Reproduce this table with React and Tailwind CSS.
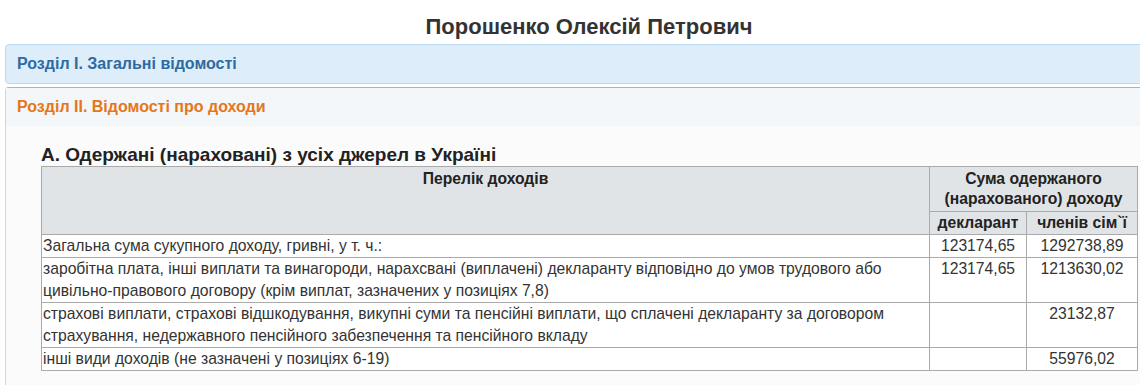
export default function App() {
  const rows = [
    {
      t: "Загальна сума сукупного доходу, гривні, у т. ч.:",
      a: "123174,65",
      b: "1292738,89",
    },
    {
      t: "заробітна плата, інші виплати та винагороди, нарахсвані (виплачені) декларанту відповідно до умов трудового або цивільно-правового договору (крім виплат, зазначених у позиціях 7,8)",
      a: "123174,65",
      b: "1213630,02",
    },
    {
      t: "страхові виплати, страхові відшкодування, викупні суми та пенсійні виплати, що сплачені декларанту за договором страхування, недержавного пенсійного забезпечення та пенсійного вкладу",
      a: "",
      b: "23132,87",
    },
    {
      t: "інші види доходів (не зазначені у позиціях 6-19)",
      a: "",
      b: "55976,02",
    },
  ];
  return (
    <div className="w-[1140px] h-[385px] overflow-hidden bg-white font-['Liberation_Sans',Arial,sans-serif]">
      <div className="w-[1178px]">
        <h1 className="text-center text-[22px] leading-[26px] font-bold text-[#333] pt-[14px] pb-[4px]">
          Порошенко Олексій Петрович
        </h1>
        <div className="pl-[5px]">
          <div className="border border-[#bcdaf1] bg-[#deedfa] rounded-[4px] px-[11px] py-[10px] text-[16px] leading-[18px] font-bold text-[#2f6a9f]">
            Розділ I. Загальні відомості
          </div>
          <div className="mt-[3px] border border-[#c3d8ea] border-t-[#8cbbe2] rounded-t-[4px] bg-[#fbfbfb]">
            <div className="bg-[#f4f7f9] px-[11px] py-[10px] text-[16px] leading-[18px] font-bold text-[#e5761a]">
              Розділ II. Відомості про доходи
            </div>
            <div className="pl-[35px] pr-[40px] pt-[18px]">
              <h3 className="text-[19px] leading-[22px] font-bold text-[#222]">
                А. Одержані (нараховані) з усіх джерел в Україні
              </h3>
              <table className="w-[1097px] border-collapse text-[15.7px] text-[#333]">
                <colgroup>
                  <col className="w-[889px]" />
                  <col className="w-[97px]" />
                  <col className="w-[111px]" />
                </colgroup>
                <thead>
                  <tr className="bg-[#e1e4e7] font-bold text-[#222] leading-[20px]">
                    <th rowSpan={2} className="border border-[#aaa] align-top text-center font-bold px-[2px] py-[2px]">
                      Перелік доходів
                    </th>
                    <th colSpan={2} className="border border-[#aaa] align-top text-center font-bold px-[2px] py-[2px]">
                      Сума одержаного (нарахованого) доходу
                    </th>
                  </tr>
                  <tr className="bg-[#e1e4e7] text-[#222] leading-[20px]">
                    <th className="border border-[#aaa] text-center font-bold px-[2px] py-[1px]">декларант</th>
                    <th className="border border-[#aaa] text-center font-bold px-[2px] py-[1px]">членів сім`ї</th>
                  </tr>
                </thead>
                <tbody className="bg-white">
                  {rows.map((r, i) => (
                    <tr key={i} className="leading-[22px]">
                      <td className="border border-[#aaa] align-top px-[1px]">{r.t}</td>
                      <td className="border border-[#aaa] align-top text-center px-[1px]">{r.a}</td>
                      <td className="border border-[#aaa] align-top text-center px-[1px]">{r.b}</td>
                    </tr>
                  ))}
                </tbody>
              </table>
              <div className="h-[20px]" />
            </div>
          </div>
        </div>
      </div>
    </div>
  );
}
